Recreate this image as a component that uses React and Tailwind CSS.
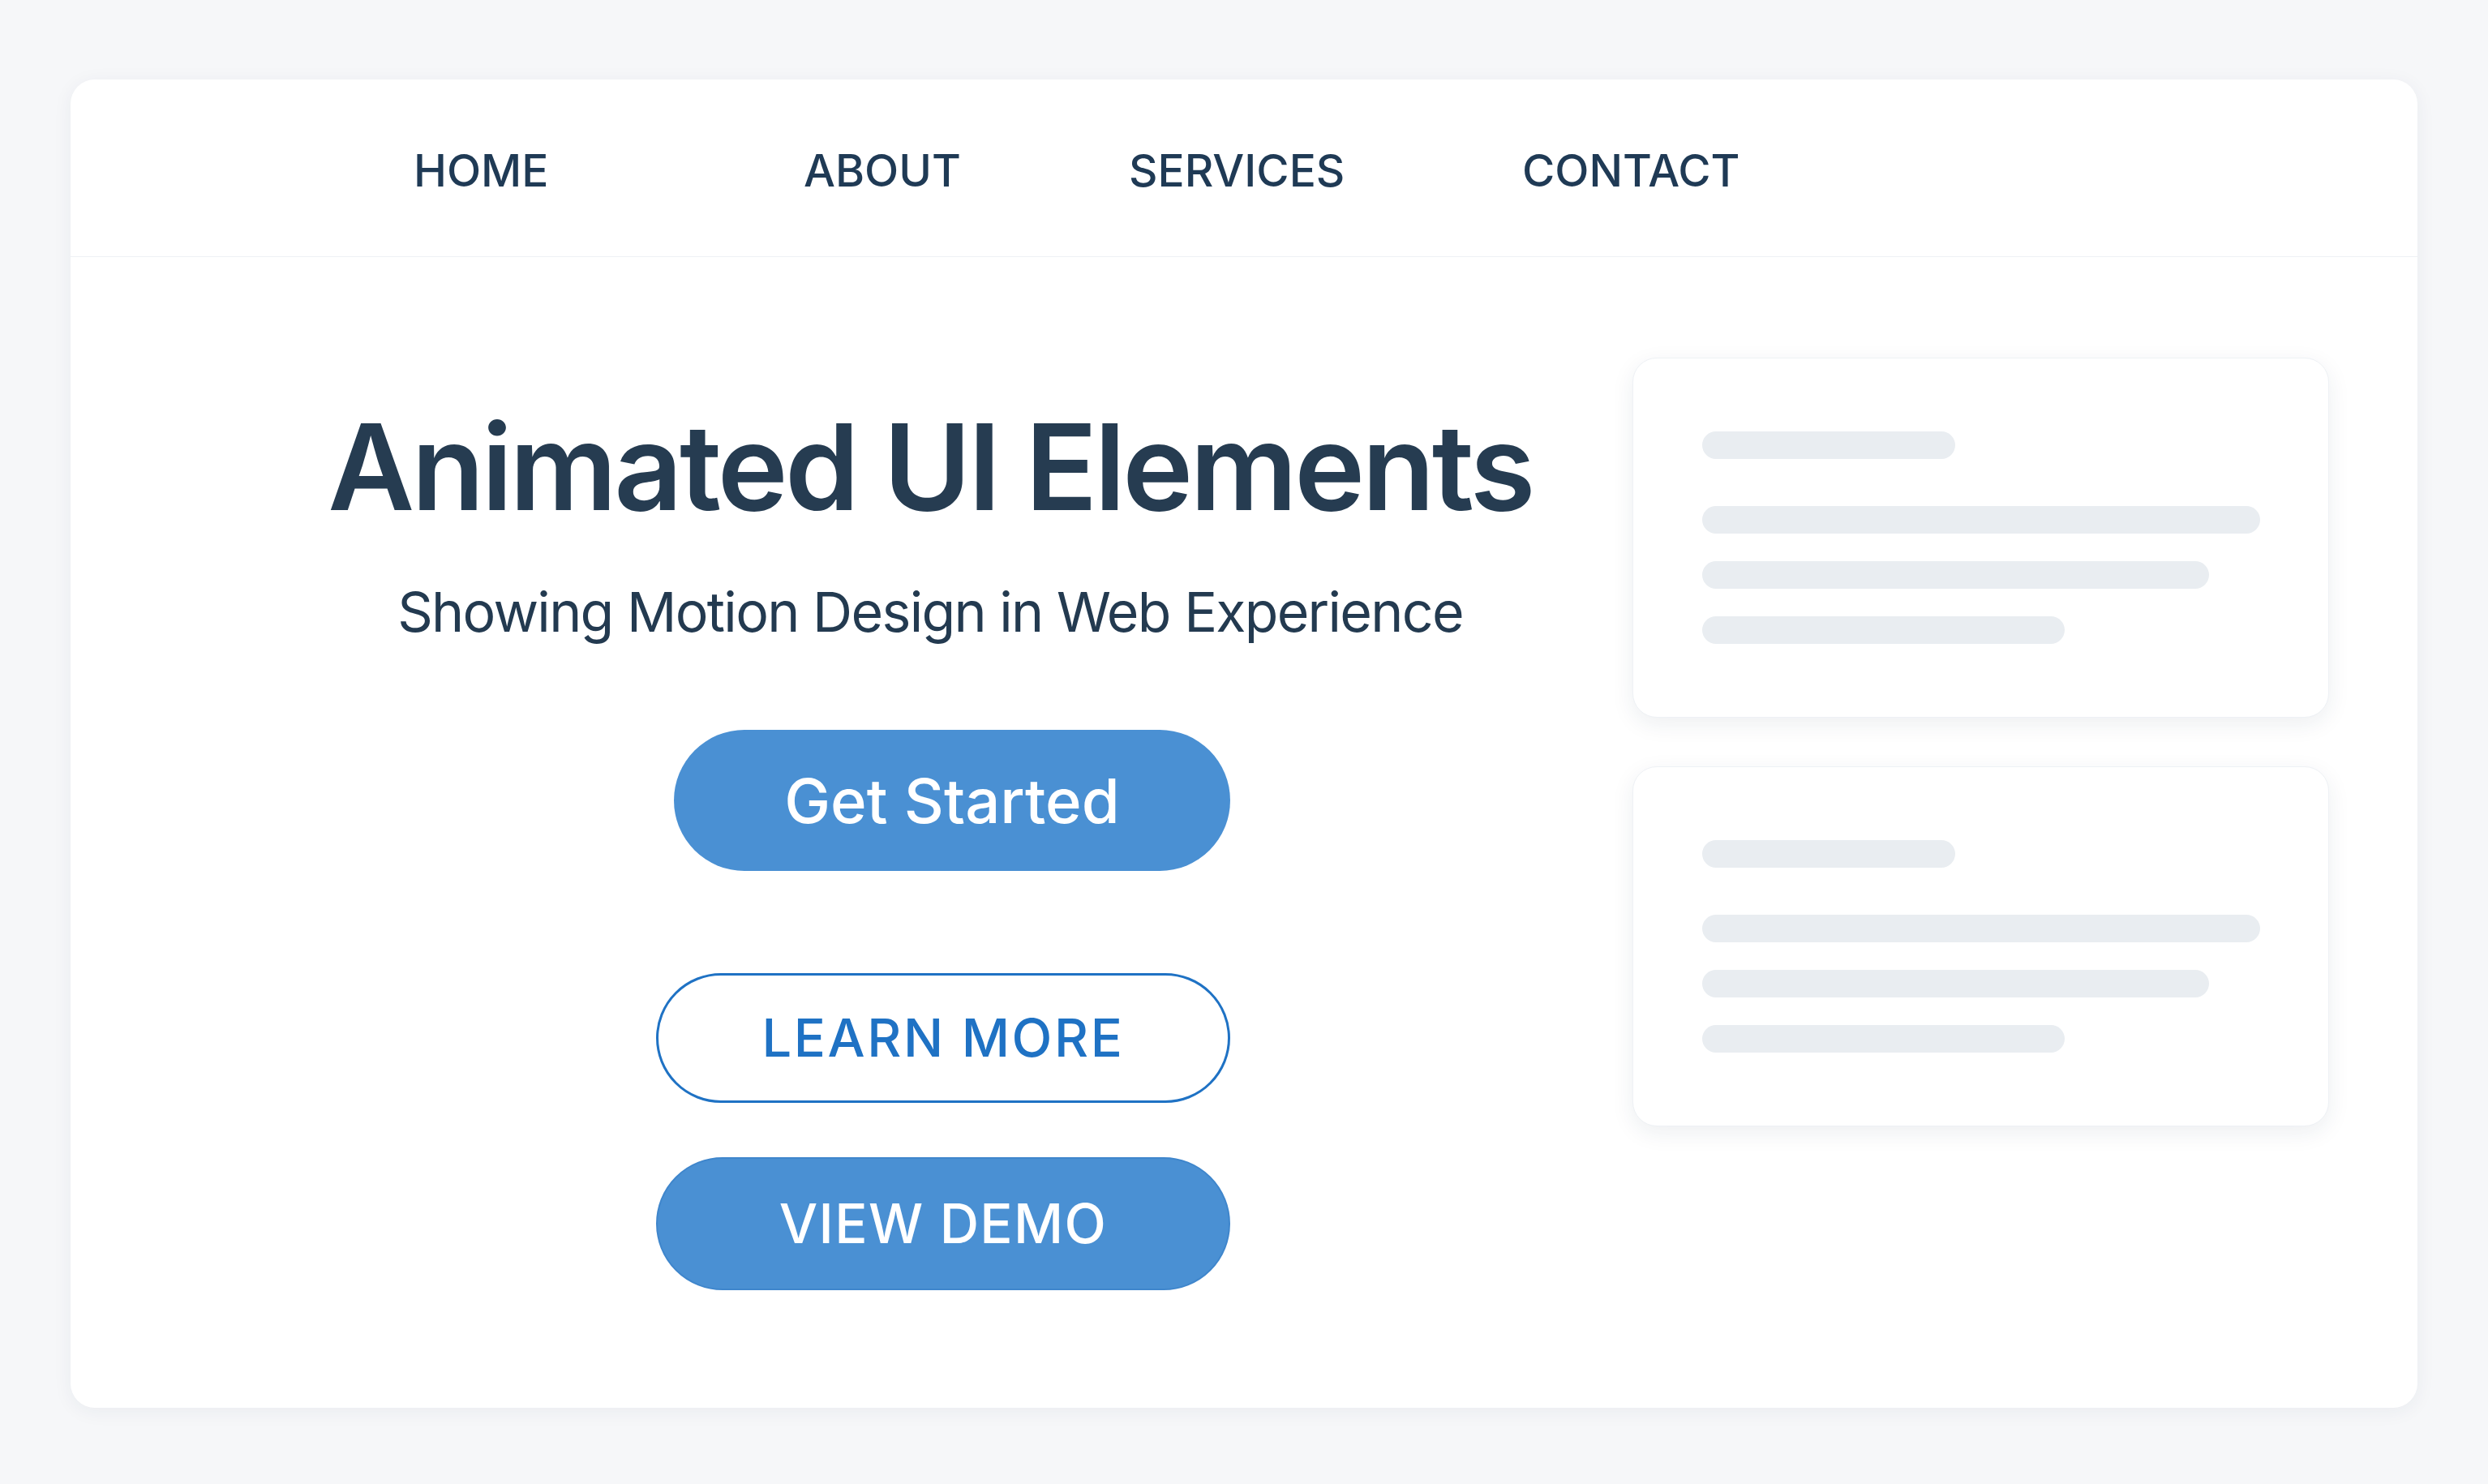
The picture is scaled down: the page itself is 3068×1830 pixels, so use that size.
import React from 'react';

const navItems = [
  { label: 'HOME', width: 'w-[481px]' },
  { label: 'ABOUT', width: 'w-[401px]' },
  { label: 'SERVICES', width: 'w-[485px]' },
  { label: 'CONTACT', width: '' },
];

const SkeletonCard = ({ className = '' }) => (
  <div
    className={`rounded-[30px] bg-white border border-[#eef1f5] shadow-[0_8px_28px_rgba(30,50,80,0.08)] pl-[85px] pr-[85px] pt-[90px] pb-[90px] ${className}`}
  >
    <div className="h-[34px] w-[312px] rounded-full bg-[#e9edf1]"></div>
    <div className="mt-[58px] h-[34px] w-[688px] rounded-full bg-[#e9edf1]"></div>
    <div className="mt-[34px] h-[34px] w-[625px] rounded-full bg-[#e9edf1]"></div>
    <div className="mt-[34px] h-[34px] w-[447px] rounded-full bg-[#e9edf1]"></div>
  </div>
);

const App = () => {
  return (
    <div
      className="min-h-screen bg-[#f6f7f9] px-[87px] pt-[98px] pb-[94px]"
      style={{ fontFamily: 'Inter, "Noto Sans", sans-serif' }}
    >
      <div className="h-[1638px] w-full rounded-[30px] bg-white shadow-[0_4px_24px_rgba(30,50,80,0.06)] overflow-hidden">
        {/* Nav */}
        <nav className="flex h-[219px] items-center border-b border-[#eef1f4] pl-[423px] pt-[6px]">
          {navItems.map((item) => (
            <div key={item.label} className={item.width}>
              <a href="#" className="text-[55px] leading-none font-medium text-[#1f3a55]">
                {item.label}
              </a>
            </div>
          ))}
        </nav>

        {/* Hero */}
        <section className="flex pl-[300px]">
          <div className="flex w-[1520px] flex-col items-center pt-[185px]">
            <h1 className="text-[147px] leading-none font-semibold tracking-[-0.025em] text-[#263c51] whitespace-nowrap">
              Animated UI Elements
            </h1>
            <p className="mt-[71px] text-[68px] leading-none tracking-[-0.025em] text-[#233a50] whitespace-nowrap">
              Showing Motion Design in Web Experience
            </p>

            <div className="mt-[112px] ml-[32px] flex w-[708px] flex-col items-end">
              <button className="flex h-[174px] w-[686px] items-center justify-center rounded-full bg-[#4a90d3] text-[76px] font-medium text-white">
                Get Started
              </button>
              <button className="mt-[126px] flex h-[160px] w-[708px] items-center justify-center rounded-full border-[3px] border-[#1f72c4] bg-white text-[65px] font-medium tracking-[0.04em] text-[#1f72c4]">
                LEARN MORE
              </button>
              <button className="mt-[67px] flex h-[164px] w-[708px] items-center justify-center rounded-full border-2 border-[#3f86cc] bg-[#4a90d3] text-[67px] font-medium tracking-[0.02em] text-white">
                VIEW DEMO
              </button>
            </div>
          </div>

          <div className="ml-[106px] w-[859px] pt-[124px]">
            <SkeletonCard />
            <SkeletonCard className="mt-[60px]" />
          </div>
        </section>
      </div>
    </div>
  );
};

export default App;
